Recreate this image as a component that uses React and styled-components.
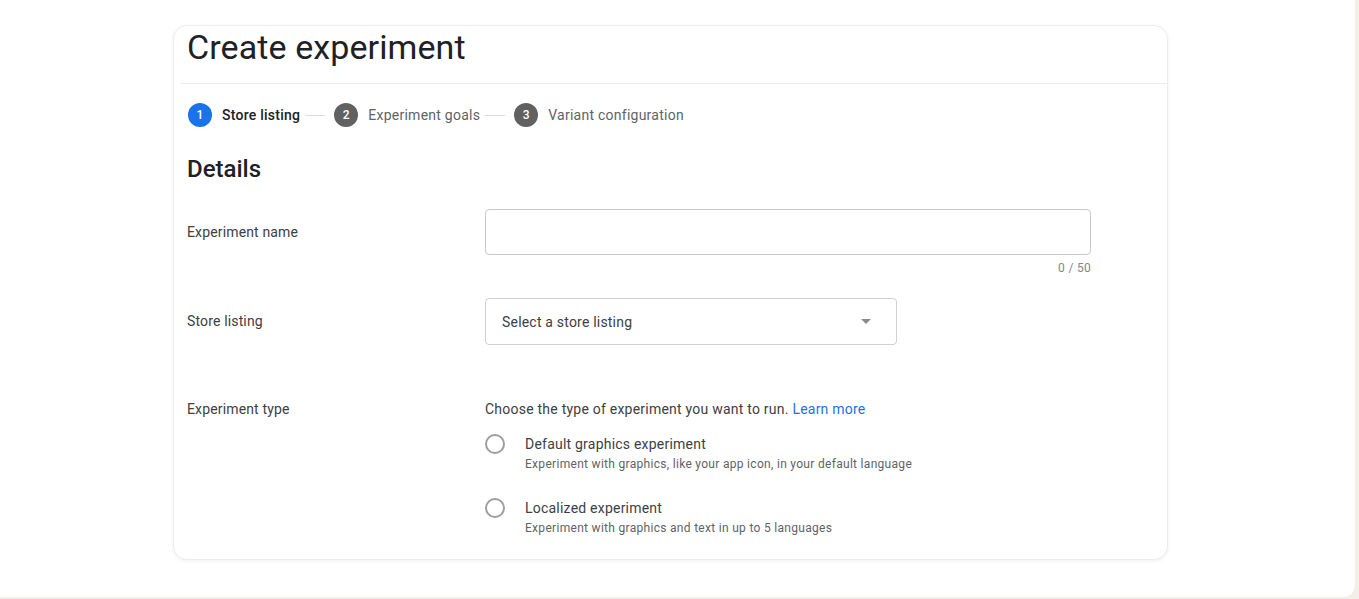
import styled, { createGlobalStyle } from "styled-components";

const GlobalStyle = createGlobalStyle`
  html, body {
    margin: 0;
    padding: 0;
    background: #f3efe8;
    font-family: Roboto, "Liberation Sans", Arial, sans-serif;
  }
`;

const steps = [
  { n: 1, label: "Store listing", active: true },
  { n: 2, label: "Experiment goals" },
  { n: 3, label: "Variant configuration" },
];

const options = [
  {
    title: "Default graphics experiment",
    desc: "Experiment with graphics, like your app icon, in your default language",
  },
  {
    title: "Localized experiment",
    desc: "Experiment with graphics and text in up to 5 languages",
  },
];

export default function App() {
  return (
    <>
      <GlobalStyle />
      <Page>
        <Card>
          <Header>
            <Title>Create experiment</Title>
          </Header>
          <Stepper>
            {steps.map((s, i) => (
              <Step key={s.n}>
                {i > 0 && <Connector />}
                <StepDot $active={s.active}>{s.n}</StepDot>
                <StepLabel $active={s.active}>{s.label}</StepLabel>
              </Step>
            ))}
          </Stepper>
          <Body>
            <Heading>Details</Heading>
            <FormRow $top={25}>
              <Label $pad={13}>Experiment name</Label>
              <Field>
                <TextInput />
                <Counter>0 / 50</Counter>
              </Field>
            </FormRow>
            <FormRow $top={22}>
              <Label $pad={13}>Store listing</Label>
              <Select>
                <span>Select a store listing</span>
                <Caret />
              </Select>
            </FormRow>
            <FormRow $top={54}>
              <Label>Experiment type</Label>
              <Field>
                <Hint>
                  Choose the type of experiment you want to run. <Link>Learn more</Link>
                </Hint>
                <Options>
                  {options.map((o) => (
                    <Option key={o.title}>
                      <Radio />
                      <div>
                        <OptionTitle>{o.title}</OptionTitle>
                        <OptionDesc>{o.desc}</OptionDesc>
                      </div>
                    </Option>
                  ))}
                </Options>
              </Field>
            </FormRow>
          </Body>
        </Card>
      </Page>
    </>
  );
}

const Page = styled.div`
width: 1355px;
height: 597px;
background: #ffffff;
border-bottom-right-radius: 12px;
padding: 25px 0 0 173px;
box-sizing: border-box;`

const Card = styled.section`
width: 995px;
height: 535px;
box-sizing: border-box;
background: #ffffff;
border: 1px solid #ececec;
border-radius: 14px;
box-shadow: 0 1px 4px rgba(0, 0, 0, 0.06);
display: flex;
flex-direction: column;
overflow: hidden;`

const Header = styled.header`
height: 58px;
box-sizing: border-box;
margin-left: 6px;
padding: 0 0 16px 7px;
border-bottom: 1px solid #ebebeb;
display: flex;
align-items: center;`

const Title = styled.h1`
margin: 0;
font-size: 34px;
line-height: 40px;
font-weight: 400;
color: #202124;
letter-spacing: 0.1px;`

const Stepper = styled.nav`
display: flex;
align-items: center;
padding: 19px 0 0 14px;`

const Step = styled.div`
display: flex;
align-items: center;`

const Connector = styled.span`
width: 20px;
height: 1px;
background: #dadce0;
margin: 0 9px 0 5px;`

const StepDot = styled.span`
width: 24px;
height: 24px;
border-radius: 50%;
background: ${(p) => (p.$active ? "#1a73e8" : "#616161")};
color: #ffffff;
font-size: 12px;
font-weight: 500;
display: flex;
align-items: center;
justify-content: center;`

const StepLabel = styled.span`
margin-left: 10px;
font-size: 14px;
letter-spacing: 0.25px;
font-weight: ${(p) => (p.$active ? 500 : 400)};
color: ${(p) => (p.$active ? "#202124" : "#5f6368")};`

const Body = styled.div`
padding: 27px 0 0 13px;`

const Heading = styled.h2`
margin: 0;
font-size: 24px;
line-height: 30px;
font-weight: 500;
color: #202124;`

const FormRow = styled.div`
display: flex;
align-items: flex-start;
margin-top: ${(p) => p.$top}px;`

const Label = styled.div`
width: 298px;
flex-shrink: 0;
padding-top: ${(p) => p.$pad || 0}px;
font-size: 14px;
line-height: 20px;
letter-spacing: 0.15px;
color: #3c4043;`

const Field = styled.div`
display: flex;
flex-direction: column;`

const TextInput = styled.div`
width: 606px;
height: 46px;
box-sizing: border-box;
border: 1px solid #c8c8c8;
border-radius: 4px;`

const Counter = styled.div`
margin-top: 5px;
text-align: right;
font-size: 12px;
line-height: 16px;
letter-spacing: 0.3px;
color: #80868b;`

const Select = styled.div`
width: 412px;
height: 47px;
box-sizing: border-box;
border: 1px solid #d0d0d0;
border-radius: 4px;
padding: 0 25px 0 16px;
display: flex;
align-items: center;
justify-content: space-between;
font-size: 14px;
letter-spacing: 0.2px;
color: #3c4043;`

const Caret = styled.span`
width: 0;
height: 0;
border-left: 5px solid transparent;
border-right: 5px solid transparent;
border-top: 5px solid #8a8a8a;`

const Hint = styled.div`
font-size: 14px;
line-height: 20px;
letter-spacing: 0.23px;
color: #3c4043;`

const Link = styled.a`
color: #1a73e8;
cursor: pointer;`

const Options = styled.div`
margin-top: 15px;
display: flex;
flex-direction: column;
gap: 26px;`

const Option = styled.label`
display: flex;
align-items: flex-start;
gap: 20px;`

const Radio = styled.span`
width: 20px;
height: 20px;
box-sizing: border-box;
border: 2px solid #9e9e9e;
border-radius: 50%;
flex-shrink: 0;`

const OptionTitle = styled.div`
font-size: 14px;
line-height: 20px;
letter-spacing: 0.22px;
color: #3c4043;`

const OptionDesc = styled.div`
margin-top: 2px;
font-size: 12px;
line-height: 16px;
letter-spacing: 0.3px;
color: #5f6368;`
